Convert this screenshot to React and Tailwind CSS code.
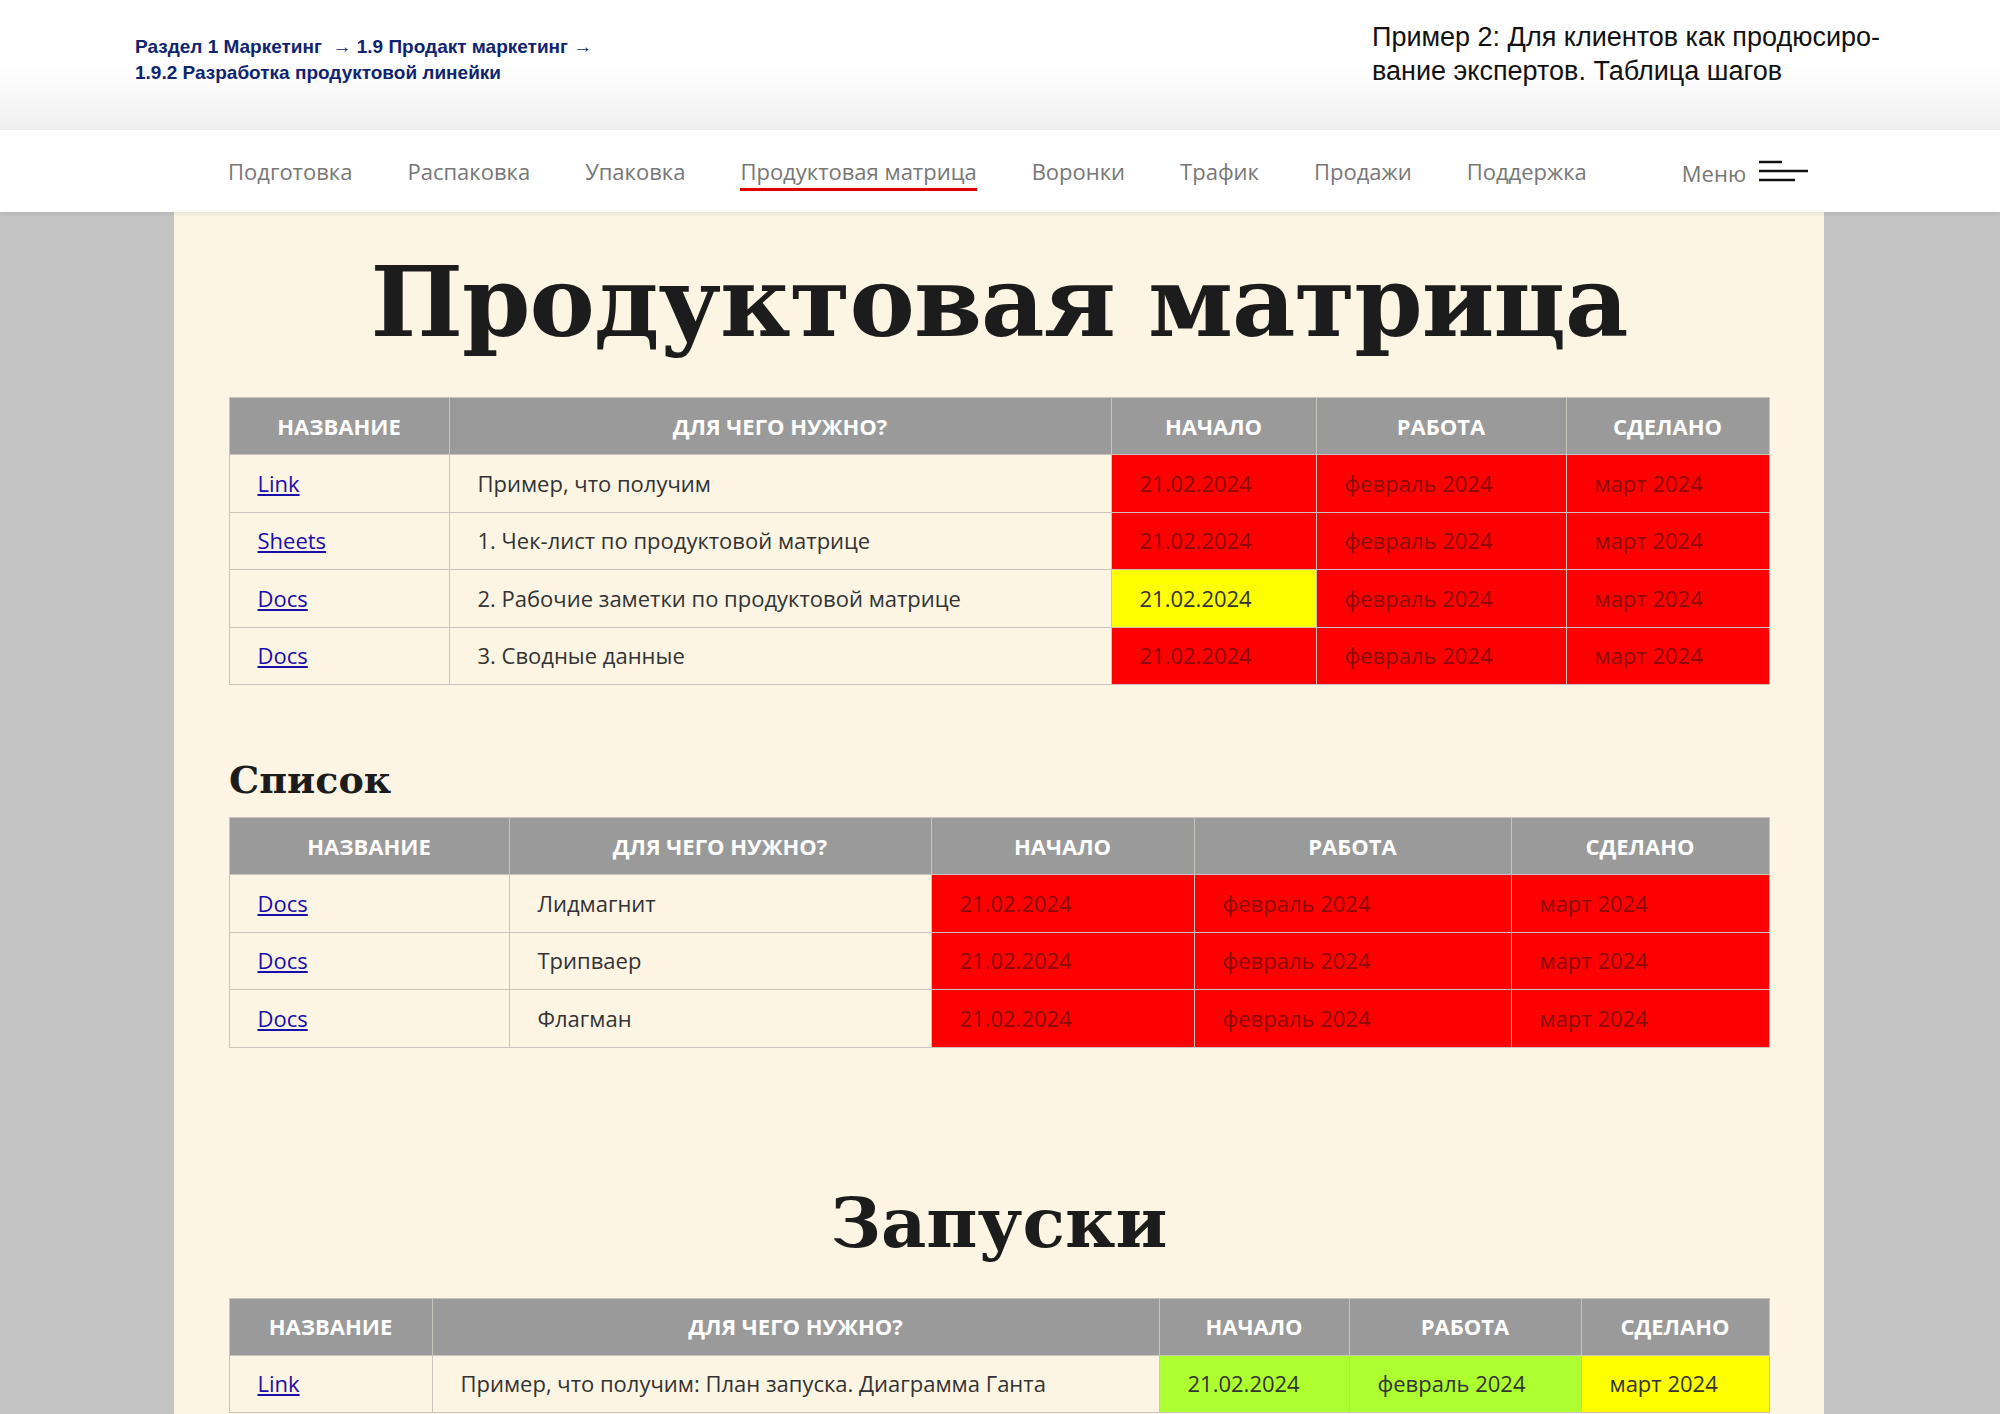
const sans = { fontFamily: '"Open Sans", "Noto Sans", sans-serif' };
const serif = { fontFamily: '"DejaVu Serif", "Liberation Serif", serif' };

const R = 'bg-[#ff0000] text-[#8a0a0a]';
const Y = 'bg-[#ffff00] text-[#333]';
const G = 'bg-[#adff2f] text-[#333]';

function Table({ cols, rows, top }) {
  return (
    <table className="w-[1540px] border-collapse text-[22px]" style={{ ...sans, tableLayout: 'fixed', marginTop: top }}>
      <colgroup>
        {cols.map((w, i) => <col key={i} style={{ width: w }} />)}
      </colgroup>
      <thead>
        <tr className="h-[57px] bg-[#9a9a9a] text-white font-bold">
          {['НАЗВАНИЕ', 'ДЛЯ ЧЕГО НУЖНО?', 'НАЧАЛО', 'РАБОТА', 'СДЕЛАНО'].map((h) => (
            <th key={h} className="border border-[#c8c4bc] text-center font-bold">{h}</th>
          ))}
        </tr>
      </thead>
      <tbody>
        {rows.map((r, i) => (
          <tr key={i} className="h-[57.5px]">
            <td className="border border-[#c8c4bc] pl-7"><span className="text-[#1a0dab] underline">{r[0]}</span></td>
            <td className="border border-[#c8c4bc] pl-7 text-[#333]">{r[1]}</td>
            <td className={`border border-[#c8c4bc] pl-7 ${r[2]}`}>21.02.2024</td>
            <td className={`border border-[#c8c4bc] pl-7 ${r[3]}`}>февраль 2024</td>
            <td className={`border border-[#c8c4bc] pl-7 ${r[4]}`}>март 2024</td>
          </tr>
        ))}
      </tbody>
    </table>
  );
}

export default function App() {
  const nav = ['Подготовка', 'Распаковка', 'Упаковка', 'Продуктовая матрица', 'Воронки', 'Трафик', 'Продажи', 'Поддержка'];
  return (
    <div className="w-[2000px] h-[1414px] overflow-hidden bg-[#c4c4c4]">
      <div className="h-[130px] bg-gradient-to-b from-white via-white to-[#f0f0f0] flex justify-between">
        <div className="pl-[135px] pt-[34px] text-[19px] leading-[26px] font-semibold text-[#0f2470]" style={{ fontFamily: '"Liberation Sans", Arial, sans-serif' }}>
          <div>Раздел 1 Маркетинг&nbsp; → 1.9 Продакт маркетинг →</div>
          <div>1.9.2 Разработка продуктовой линейки</div>
        </div>
        <div className="w-[628px] pt-[20px] text-[27px] leading-[34px] text-[#111]" style={{ fontFamily: '"Liberation Sans", Arial, sans-serif' }}>
          <div>Пример 2: Для клиентов как продюсиро-</div>
          <div>вание экспертов. Таблица шагов</div>
        </div>
      </div>
      <div className="h-[82px] bg-white flex items-center pl-[228px] text-[22px] text-[#777] shadow-[0_2px_4px_rgba(0,0,0,0.08)] relative z-10" style={sans}>
        <div className="flex gap-[55px]">
          {nav.map((n) => (
            <div key={n} className="relative">
              {n}
              {n === 'Продуктовая матрица' && <div className="absolute left-0 right-0 top-[33px] h-[3px] bg-[#e00000]" />}
            </div>
          ))}
        </div>
        <div className="ml-[95px] flex items-center gap-3">
          <span className="pt-1">Меню</span>
          <svg width="50" height="30" viewBox="0 0 50 30">
            <line x1="1" y1="6" x2="24" y2="6" stroke="#111" strokeWidth="2.5" />
            <line x1="1" y1="15" x2="50" y2="15" stroke="#111" strokeWidth="2.5" />
            <line x1="1" y1="24" x2="37" y2="24" stroke="#111" strokeWidth="2.5" />
          </svg>
        </div>
      </div>
      <div className="ml-[174px] w-[1650px] h-[1202px] bg-[#fcf5e4] flex flex-col items-center">
        <h1 className="mt-[30px] text-[98px] leading-[120px] font-bold text-[#1c1c1c] tracking-[-1px]" style={serif}>Продуктовая матрица</h1>
        <Table top={35} cols={[220, 662, 205, 250, 203]} rows={[
          ['Link', 'Пример, что получим', R, R, R],
          ['Sheets', '1. Чек-лист по продуктовой матрице', R, R, R],
          ['Docs', '2. Рабочие заметки по продуктовой матрице', Y, R, R],
          ['Docs', '3. Сводные данные', R, R, R],
        ]} />
        <div className="w-[1540px] mt-[70px] text-[38px] leading-[50px] font-bold text-[#1c1c1c]" style={serif}>Список</div>
        <Table top={12} cols={[280, 422, 263, 317, 258]} rows={[
          ['Docs', 'Лидмагнит', R, R, R],
          ['Docs', 'Трипваер', R, R, R],
          ['Docs', 'Флагман', R, R, R],
        ]} />
        <div className="mt-[130px] text-[70px] leading-[90px] font-bold text-[#1c1c1c]" style={serif}>Запуски</div>
        <Table top={30} cols={[203, 727, 190, 232, 188]} rows={[
          ['Link', 'Пример, что получим: План запуска. Диаграмма Ганта', G, G, Y],
        ]} />
      </div>
    </div>
  );
}
